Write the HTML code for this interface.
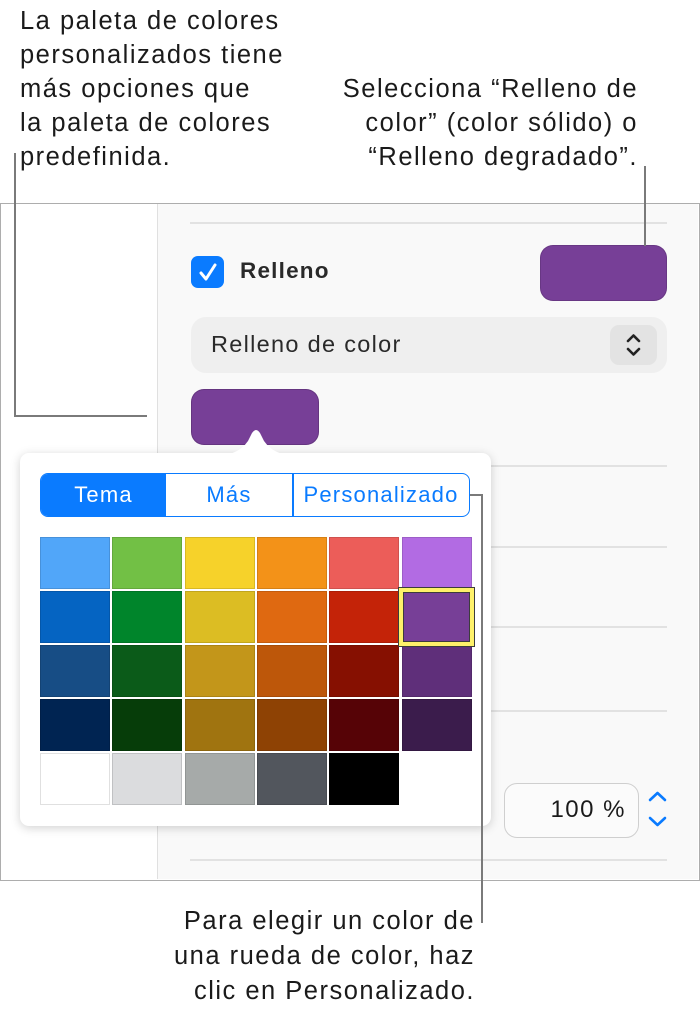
<!DOCTYPE html>
<html><head><meta charset="utf-8"><style>
*{margin:0;padding:0;box-sizing:border-box}
body{width:700px;height:1020px;background:#fff;position:relative;overflow:hidden;font-family:"Liberation Sans",sans-serif;color:#1d1d1f}
.a{position:absolute}
.t{font-size:25.5px;letter-spacing:1.5px;line-height:34px;color:#1a1a1a;white-space:nowrap}
.hl{position:absolute;height:2px;background:#e2e2e2}
.cell{position:absolute;width:70px;height:52px;box-shadow:inset 0 0 0 1px rgba(0,0,0,0.12)}
.ln{position:absolute;background:#7a7a7a}
.seg{position:absolute;top:8px;text-align:center;font-size:22px;letter-spacing:1.2px}
</style></head><body>
<div class="a t" style="left:20px;top:4px">La paleta de colores<br>personalizados tiene<br>más opciones que<br>la paleta de colores<br>predefinida.</div>
<div class="a t" style="right:62px;top:72px;text-align:right">Selecciona “Relleno de<br>color” (color sólido) o<br>“Relleno degradado”.</div>
<div class="a t" style="right:225px;top:904px;text-align:right;line-height:35px">Para elegir un color de<br>una rueda de color, haz<br>clic en Personalizado.</div>

<div class="a" style="left:0;top:203px;width:700px;height:678px;border:1.5px solid #adadad;background:#fff"></div>
<div class="a" style="left:157px;top:204px;width:541px;height:675px;background:#f9f9f9;border-left:1.5px solid #e0e0e0"></div>
<div class="hl" style="left:190px;top:222px;width:477px"></div>
<div class="hl" style="left:190px;top:465px;width:477px"></div>
<div class="hl" style="left:190px;top:546px;width:477px"></div>
<div class="hl" style="left:190px;top:626px;width:477px"></div>
<div class="hl" style="left:190px;top:710px;width:477px"></div>
<div class="hl" style="left:190px;top:859px;width:477px"></div>

<div class="a" style="left:191px;top:256px;width:33px;height:32px;background:#0a7bff;border-radius:7px"></div>
<svg class="a" style="left:191px;top:256px" width="33" height="32"><path d="M10 17 L15 23 L24 9" stroke="#fff" stroke-width="3" fill="none" stroke-linecap="round" stroke-linejoin="round"/></svg>
<div class="a" style="left:240px;top:258px;font-size:22.5px;letter-spacing:1.2px;font-weight:bold;color:#2a2a2a">Relleno</div>
<div class="a" style="left:540px;top:245px;width:127px;height:56px;background:#773f97;border-radius:13px;box-shadow:inset 0 0 0 1px rgba(0,0,0,0.12)"></div>

<div class="a" style="left:191px;top:317px;width:476px;height:56px;background:#efefef;border-radius:15px"></div>
<div class="a" style="left:211px;top:331px;font-size:23.5px;letter-spacing:1.3px;color:#2a2a2a">Relleno de color</div>
<div class="a" style="left:610px;top:325px;width:47px;height:40px;background:#e3e3e3;border-radius:9px"></div>
<svg class="a" style="left:610px;top:325px" width="47" height="40"><path d="M18 16 L23.5 10.5 L29 16 M18 24 L23.5 29.5 L29 24" stroke="#222" stroke-width="2.6" fill="none" stroke-linecap="round" stroke-linejoin="round"/></svg>

<div class="a" style="left:191px;top:389px;width:128px;height:56px;background:#773f97;border-radius:13px;box-shadow:inset 0 0 0 1px rgba(0,0,0,0.15)"></div>

<div class="a" style="left:504px;top:783px;width:135px;height:55px;border:1.5px solid #cfcfcf;border-radius:13px;background:#fbfbfb"></div>
<div class="a" style="left:504px;top:796px;width:122px;text-align:right;font-size:24px;letter-spacing:1.5px;color:#1a1a1a">100 %</div>
<svg class="a" style="left:645px;top:788px" width="25" height="44"><path d="M5 12 L12.5 5 L20 12 M5 30 L12.5 37 L20 30" stroke="#0a7bff" stroke-width="2.6" fill="none" stroke-linecap="round" stroke-linejoin="round"/></svg>

<div class="a" style="left:20px;top:453px;width:471px;height:373px;background:#fff;border-radius:9px;box-shadow:0 2px 10px rgba(0,0,0,0.18)"></div>
<svg class="a" style="left:220px;top:424px" width="72" height="32"><path d="M0 31 Q18 31 28 17 L32 9 Q36 3 40 9 L44 17 Q54 31 72 31 Z" fill="#fff"/></svg>

<div class="a" style="left:40px;top:473px;width:430px;height:44px;border:1.5px solid #0a7bff;border-radius:8px;overflow:hidden;background:#fff">
 <div class="a" style="left:0;top:0;width:125px;height:42px;background:#0a7bff"></div>
 <div class="a" style="left:251px;top:0;width:1.5px;height:42px;background:#0a7bff"></div>
 <div class="seg" style="left:0;width:125px;color:#fff">Tema</div>
 <div class="seg" style="left:125px;width:126px;color:#0a7bff">Más</div>
 <div class="seg" style="left:252px;width:176px;color:#0a7bff">Personalizado</div>
</div>

<div class="cell" style="left:40px;top:537px;background:#51a6f9"></div>
<div class="cell" style="left:112px;top:537px;background:#72c045"></div>
<div class="cell" style="left:185px;top:537px;background:#f6d22a"></div>
<div class="cell" style="left:257px;top:537px;background:#f39218"></div>
<div class="cell" style="left:329px;top:537px;background:#ec5d59"></div>
<div class="cell" style="left:402px;top:537px;background:#b26be3"></div>

<div class="cell" style="left:40px;top:591px;background:#0564c2"></div>
<div class="cell" style="left:112px;top:591px;background:#00852b"></div>
<div class="cell" style="left:185px;top:591px;background:#dcbd23"></div>
<div class="cell" style="left:257px;top:591px;background:#df6911"></div>
<div class="cell" style="left:329px;top:591px;background:#c42308"></div>
<div class="cell" style="left:402px;top:591px;background:#773f97"></div>

<div class="cell" style="left:40px;top:645px;background:#174d85"></div>
<div class="cell" style="left:112px;top:645px;background:#0b5b19"></div>
<div class="cell" style="left:185px;top:645px;background:#c3961a"></div>
<div class="cell" style="left:257px;top:645px;background:#bd570a"></div>
<div class="cell" style="left:329px;top:645px;background:#861001"></div>
<div class="cell" style="left:402px;top:645px;background:#5f2f7a"></div>

<div class="cell" style="left:40px;top:699px;background:#002452"></div>
<div class="cell" style="left:112px;top:699px;background:#063d09"></div>
<div class="cell" style="left:185px;top:699px;background:#a07410"></div>
<div class="cell" style="left:257px;top:699px;background:#8e4204"></div>
<div class="cell" style="left:329px;top:699px;background:#560306"></div>
<div class="cell" style="left:402px;top:699px;background:#3b1c4c"></div>

<div class="cell" style="left:40px;top:753px;background:#fff"></div>
<div class="cell" style="left:112px;top:753px;background:#dbdcde"></div>
<div class="cell" style="left:185px;top:753px;background:#a6aaa9"></div>
<div class="cell" style="left:257px;top:753px;background:#52565d"></div>
<div class="cell" style="left:329px;top:753px;background:#000"></div>

<div class="a" style="left:398px;top:587px;width:77px;height:60px;border:1.5px solid #3c3c3c;background:#fef16a;padding:4px">
 <div style="width:100%;height:100%;background:#773f97;border:1.5px solid #3c3c3c"></div>
</div>

<div class="ln" style="left:14px;top:153px;width:2px;height:264px"></div>
<div class="ln" style="left:14px;top:415px;width:133px;height:2px"></div>
<div class="ln" style="left:644px;top:166px;width:2px;height:80px"></div>
<div class="ln" style="left:470px;top:494px;width:13px;height:2px"></div>
<div class="ln" style="left:481px;top:494px;width:2px;height:429px"></div>
</body></html>
